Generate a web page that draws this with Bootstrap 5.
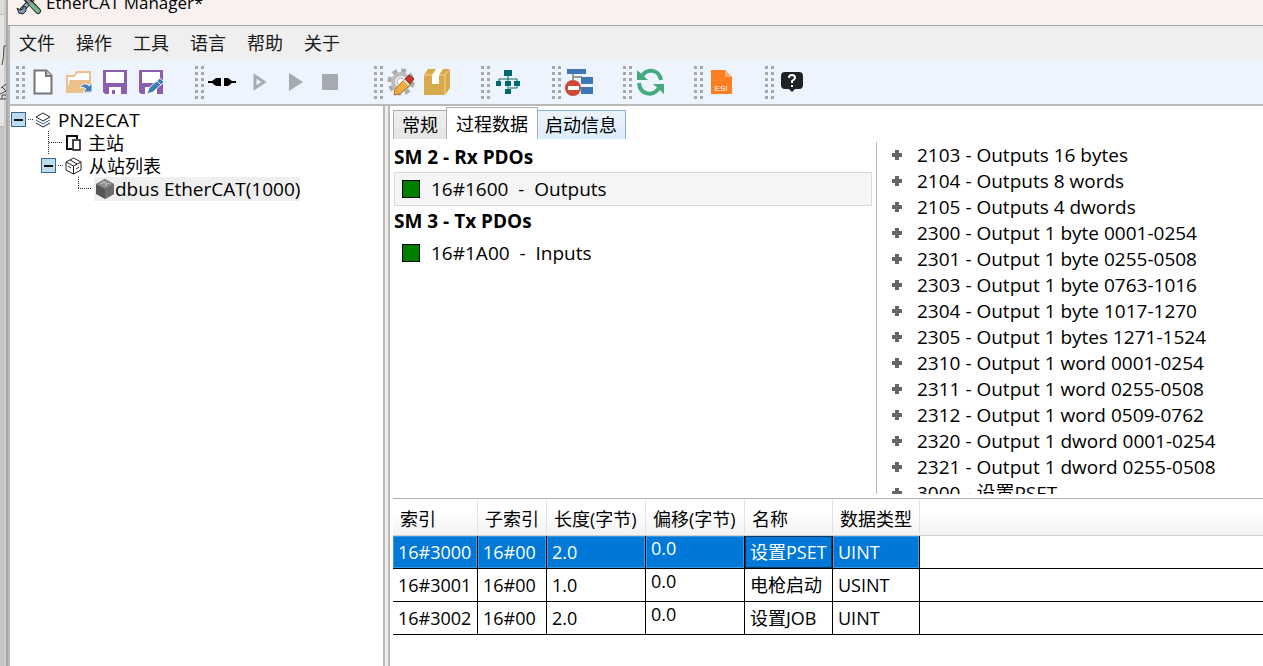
<!DOCTYPE html>
<html lang="zh-CN">
<head>
<meta charset="utf-8">
<meta name="viewport" content="width=device-width, initial-scale=1">
<title>EtherCAT Manager</title>
<link href="https://cdn.jsdelivr.net/npm/bootstrap@5.3.0/dist/css/bootstrap.min.css" rel="stylesheet">
<style>
body{font-family:"Open Sans","Noto Sans CJK SC",sans-serif;font-size:18px;line-height:24px;color:#000;background:#fff}
button{color:inherit}
.desk{width:6px;background:#e6e5e5;border-right:2px solid #cfcccc}
.desk .upper{height:15px;background:#dcdada;border-bottom:1px solid #c4c2c2}
.desk .middle{height:111px}
.desk .lower{background:#c6c4c5;border-top:1px solid #b5b3b3}
.win{border-left:2px solid #a9a9a9}
.titlebar{height:26px;background:#f9f1ef;border-bottom:1px solid #a5a5a5;padding-left:8px}
.titlebar .cap{font-size:17px;line-height:26px;margin-top:-10px}
.titlebar svg{margin-top:-6px}
.client{border-left:2px solid #b9b9b9}
.menubar{background:#efefef;height:34px;gap:21px;padding:0 9px}
.menubar a,.menubar a:hover{color:#1a1a1a;text-decoration:none}
.toolbar{background:#edf4fd;height:46px;border-bottom:2px solid #b9b9b9;padding-left:3px;gap:23px}
.tool{border:0;background:none;padding:0;width:36px;height:32px}
.grip{width:12px;height:33px;background:conic-gradient(#a8a8aa 25%,transparent 0) 0 0/6px 6px}
.tree{width:373px;padding:2px 0 0 1px}
.tree .line{height:23px;white-space:nowrap}
.latin{font-size:19px}
.twig{margin-right:7px}
.toggle{width:15px;height:15px;border:1px solid #39648c;background:#bcdcf0;padding:0}
.toggle::before{content:"";width:9px;height:2px;background:#111}
.dots{width:6px;height:1px;margin:0 1px 0 2px;background:repeating-linear-gradient(90deg,#333 0 1px,transparent 1px 2px)}
.nested{padding-left:30px}
.marked{background:#efefef}
.split{width:7px;background:#efefef;border-left:2px solid #b9b9b9;border-right:2px solid #b9b9b9}
.tabs{height:33px;margin:0 0 3px 3px}
.tabs button{border:1px solid #acacac;border-bottom:0;background:linear-gradient(#f0f0f0,#e4e4e4);height:29px;padding:0 8px;border-right:0}
.tabs button.current{background:#fff;height:32px;padding:0 9px;border-right:1px solid #acacac}
.tabs button.hot{background:linear-gradient(#ecf4fc,#dcecfc);border:1px solid #7eb4ea;border-bottom:0;border-left:0;padding:0 8px 0 7px}
.pdos{width:486px;padding:0 4px 0 4px;font-size:19px}
.pdos h2{font-size:19px;line-height:30px;font-weight:700;margin:0}
.pdo{height:34px;border:1px solid transparent;padding-left:7px;white-space:pre}
.pdo.chosen{background:#f5f5f5;border-color:#dadada}
.led{width:18px;height:18px;background:green;border:1px solid #000;margin-right:11px}
.objects{border-left:1px solid #b9b9b9;padding-left:15px;margin:0;font-size:19px}
.objects li{height:26px;white-space:nowrap}
.plus{width:10px;height:10px;margin-right:15px;border:0;padding:0;background:linear-gradient(#666,#666) center/10px 4px no-repeat,linear-gradient(#666,#666) center/4px 10px no-repeat}
.lowerpane{border-top:1px solid #b0b0b0;margin:4px 0 31px 3px;padding-top:1px}
.vars{table-layout:fixed;width:100%;border-collapse:separate;border-spacing:0}
.vars th{font-weight:400;height:36px;padding:2px 0 0 7px;background:linear-gradient(#fff 35%,#f3f3f4);border-right:1px solid #e2e2e2;border-bottom:1px solid #d0d0d0;white-space:nowrap}
.vars td{height:33px;padding:0 0 0 5px;border-right:1px solid #000;border-bottom:1px solid #000;white-space:nowrap}
.vars td.high{vertical-align:top}
.vars .picked td:not(:last-child){background:#0078d7;color:#fff;box-shadow:inset 0 0 0 1px #3b97e0}
.vars .picked td.focus{box-shadow:inset 0 0 0 1px #043a68}
.vars th:last-child,.vars td:last-child{border-right:0}
</style>
</head>
<body>
<div class="d-flex vh-100 overflow-hidden">
<div class="desk flex-shrink-0 d-flex flex-column"><div class="upper"></div>
<div class="middle"><svg class="d-block" width="6" height="110" viewBox="0 0 6 110"><path d="M6 31H4q0 12-2 19M6 69 1 73M2 72l4 4M6 76 0 79M2 80h4M2 80v4M0 84h6" fill="none" stroke="#444"/></svg></div>
<div class="lower flex-grow-1"></div></div>
<div class="win d-flex flex-column flex-grow-1 overflow-hidden">
<header class="titlebar d-flex flex-shrink-0">
<svg class="flex-shrink-0" width="26" height="22" viewBox="0 0 26 22"><g fill="none" stroke-linecap="round"><path d="M19 2 5 17" stroke="#222" stroke-width="5"/><path d="M19 2 6 16" stroke="#9fb4cc" stroke-width="3"/><path d="M8 2 22 17" stroke="#222" stroke-width="6"/><path d="m15 10 7 7" stroke="#74b58f" stroke-width="4"/><path d="M8 2 14 9" stroke="#8a8f96" stroke-width="3"/></g><path d="m1 14 3 2 3-1 0-3 3 1 0 4-3 3-4-1z" fill="#7d9cc0" stroke="#222"/></svg>
<div class="cap ms-1 text-nowrap">EtherCAT Manager*</div>
</header>
<div class="client d-flex flex-column flex-grow-1 overflow-hidden">
<nav class="menubar d-flex align-items-center flex-shrink-0"><a href="#">文件</a><a href="#">操作</a><a href="#">工具</a><a href="#">语言</a><a href="#">帮助</a><a href="#">关于</a></nav>
<div class="toolbar d-flex align-items-center flex-shrink-0" role="toolbar">
<div class="d-flex"><span class="grip"></span>
<button class="tool d-flex align-items-center justify-content-center" aria-label="新建"><svg width="20" height="26" viewBox="0 0 20 26"><path d="M1.500 1.500h12l5 5v18h-17z" fill="#fff" stroke="#777" stroke-width="2"/><path d="M13 1v6h6" fill="#ccc" stroke="#777" stroke-width="2"/></svg></button>
<button class="tool d-flex align-items-center justify-content-center" aria-label="打开"><svg width="28" height="24" viewBox="0 0 28 24"><path d="M2 22V6h7l3-4h13v20z" fill="#fff" stroke="#ecc088" stroke-width="2"/><path d="M1 23 5 10h20l-3 13z" fill="#ecc088"/><path d="M15 18c2-5 7-5 9-2l3-3v9h-9l3-3c-2-2-4-2-6-1z" fill="#3f7eb8" stroke="#edf4fd"/></svg></button>
<button class="tool d-flex align-items-center justify-content-center" aria-label="保存"><svg width="26" height="26" viewBox="0 0 26 26"><path d="M1 1h24v24H3l-2-2z" fill="#8b5db0"/><path d="M4 3h18v11H4zM7 18h12v7H7z" fill="#fff"/><path d="M10 21h3v4h-3z" fill="#8b5db0"/></svg></button>
<button class="tool d-flex align-items-center justify-content-center" aria-label="另存为"><svg width="26" height="26" viewBox="0 0 26 26"><path d="M1 1h24v24H3l-2-2z" fill="#8b5db0"/><path d="M4 3h18v11H4zM7 18h12v7H7z" fill="#fff"/><path d="m9 25 2-6 11-10 4 4-11 10z" fill="#3d7eb5" stroke="#edf4fd"/><path d="m19 12 4 4" stroke="#fff"/></svg></button></div>
<div class="d-flex"><span class="grip"></span>
<button class="tool d-flex align-items-center justify-content-center" aria-label="连接"><svg width="28" height="10" viewBox="0 0 28 10"><path d="M0 5h28" stroke="#000" stroke-width="2"/><path d="M13 1v8H8L4 6V4l4-3zM16 1h4l4 3v2l-4 3h-4z" fill="#000"/><path d="M14.500 0v10" stroke="#edf4fd" stroke-width="3"/></svg></button>
<button class="tool d-flex align-items-center justify-content-center" aria-label="单步"><svg class="ms-1" width="14" height="18" viewBox="0 0 14 18"><path d="M2 3v12l9-6z" fill="none" stroke="#a8acb3" stroke-width="3"/></svg></button>
<button class="tool d-flex align-items-center justify-content-center" aria-label="运行"><svg class="ms-1" width="14" height="18" viewBox="0 0 14 18"><path d="M0 0v18l14-9z" fill="#a6aab1"/></svg></button>
<button class="tool d-flex align-items-center justify-content-center" aria-label="停止"><svg width="16" height="16" viewBox="0 0 16 16"><rect width="16" height="16" rx="1" fill="#a6aab1"/></svg></button></div>
<div class="d-flex"><span class="grip"></span>
<button class="tool d-flex align-items-center justify-content-center" aria-label="设置"><svg width="28" height="28" viewBox="0 0 28 28"><circle cx="14" cy="14" r="11.500" fill="none" stroke="#aaa" stroke-width="4" stroke-dasharray="5 4"/><circle cx="14" cy="14" r="8" fill="none" stroke="#bbb" stroke-width="4"/><circle cx="14" cy="14" r="4" fill="#fff" stroke="#aaa"/><path d="m7 27 1-6 10-10 6 5-11 10z" fill="#f0ad3e" stroke="#a6762c"/><path d="m18 11 4-4 5 4-4 5z" fill="#c83a2b" stroke="#8a2418"/><path d="m17 12 5 5" stroke="#ddd" stroke-width="2"/></svg></button>
<button class="tool d-flex align-items-center justify-content-center" aria-label="打包"><svg width="28" height="28" viewBox="0 0 28 28"><path d="M1 7 5 1h22v19l-5 7H1z" fill="#d9aa4c"/><path d="M1 7h21v20M22 7l5-6" fill="none" stroke="#f2d69a"/><path d="M9 7l4-6h7l-4 6v9H9z" fill="#fff"/></svg></button></div>
<div class="d-flex"><span class="grip"></span>
<button class="tool d-flex align-items-center justify-content-center" aria-label="拓扑"><svg width="24" height="24" viewBox="0 0 24 24"><path d="M12 4v18M3 13V9h18v9h-8" fill="none" stroke="#0a6b6e" stroke-width="1"/><path d="M8 0h8v6H8zM0 11h5v5H0zM9 11h6v5H9zM18 11h6v5h-6zM9 19h6v5H9z" fill="#006a6e"/></svg></button></div>
<div class="d-flex"><span class="grip"></span>
<button class="tool d-flex align-items-center justify-content-center" aria-label="断开"><svg width="28" height="28" viewBox="0 0 28 28"><path d="M8 4v8M8 9h9" stroke="#999" stroke-width="2"/><path d="M2 1h19v5H2zM16 9h12v7H16zM16 19h12v7H16z" fill="#3d78b4"/><circle cx="8" cy="20" r="8" fill="#cd4936"/><path d="M3 18h11v4H3z" fill="#fff"/></svg></button></div>
<div class="d-flex"><span class="grip"></span>
<button class="tool d-flex align-items-center justify-content-center" aria-label="刷新"><svg width="28" height="28" viewBox="0 0 28 28"><g fill="none" stroke="#43aa7d" stroke-width="4"><path d="M6 8c5-8 17-7 19 4"/><path d="M3 15c1 12 14 14 20 5"/></g><path d="M1 2v10h11zM28 26V16H17z" fill="#43aa7d"/></svg></button></div>
<div class="d-flex"><span class="grip"></span>
<button class="tool d-flex align-items-center justify-content-center" aria-label="ESI"><svg width="22" height="26" viewBox="0 0 22 26"><path d="M1 1h14l7 7v17H1z" fill="#ff7e22"/><path d="M15 1v7h7z" fill="#efb57c"/><text x="11" y="22" text-anchor="middle" font-family="Liberation Sans" font-size="8" fill="#fff">ESI</text></svg></button></div>
<div class="d-flex"><span class="grip"></span>
<button class="tool d-flex align-items-center justify-content-center" aria-label="帮助"><svg width="22" height="22" viewBox="0 0 22 22"><path d="M4 1h14q4 0 4 4v9q0 4-4 4h-4l-3 3-3-3H4q-4 0-4-4V5q0-4 4-4z" fill="#1e2126"/><path d="M8 7q0-3 3-3t3 3q0 1-3 3v2M11 14v2" fill="none" stroke="#fff" stroke-width="2"/></svg></button></div>
</div>
<main class="d-flex flex-grow-1 overflow-hidden">
<aside class="tree flex-shrink-0">
<div class="line d-flex align-items-center latin"><button class="toggle d-flex align-items-center justify-content-center" aria-label="折叠"></button><span class="dots"></span><svg class="twig" width="16" height="16" viewBox="0 0 16 16"><path d="m8 1 7 4-7 4-7-4z" fill="none" stroke="#222"/><path d="m1 8 7 4 7-4" fill="none" stroke="#3566b0"/><path d="m1 11 7 4 7-4" fill="none" stroke="#222"/></svg>PN2ECAT</div>
<div class="line d-flex align-items-center"><svg width="54" height="23" viewBox="0 0 54 23"><path d="M37.500 0v23M38 11.500h13" stroke="#222" stroke-dasharray="1 1"/></svg><svg class="twig" width="16" height="16" viewBox="0 0 16 16"><path d="M7 14H2V1h10v3" fill="none" stroke="#111" stroke-width="2"/><path d="M8 5h7v10H8z" fill="none" stroke="#111" stroke-width="1.500"/></svg>主站</div>
<div class="line d-flex align-items-center nested"><button class="toggle d-flex align-items-center justify-content-center" aria-label="折叠"></button><span class="dots"></span><svg class="twig" width="17" height="18" viewBox="0 0 17 18"><path d="m8.500 1 7.500 4v8l-7.500 4L1 13V5zM1 5l7.500 4L16 5M8.500 9v8M5 3l7 4M3 9l3 2M11 12l3-2" fill="none" stroke="#222"/></svg>从站列表</div>
<div class="line d-flex align-items-center latin"><svg width="83" height="23" viewBox="0 0 83 23"><path d="M67.500 0v11M67 11.500h14" fill="none" stroke="#222" stroke-dasharray="1 1"/></svg><span class="marked d-flex align-items-center ps-0"><svg width="21" height="20" viewBox="0 0 21 20"><path d="m11 0 9 5v10l-9 5-9-5V5z" fill="#555"/><path d="m11 0 9 5-9 5-9-5z" fill="#8a8a8a"/><path d="m11 10 9-5v10l-9 5z" fill="#6d6d6d"/><path d="m7 5 3-2 3 2-2 2M14 4l1 1" fill="none" stroke="#ddd"/></svg>dbus EtherCAT(1000)</span></div>
</aside>
<div class="split flex-shrink-0"></div>
<section class="d-flex flex-column flex-grow-1 overflow-hidden">
<div class="tabs d-flex align-items-end flex-shrink-0"><button>常规</button><button class="current">过程数据</button><button class="hot">启动信息</button></div>
<div class="d-flex flex-grow-1 overflow-hidden">
<div class="pdos flex-shrink-0">
<h2>SM 2 - Rx PDOs</h2><div class="pdo chosen d-flex align-items-center"><span class="led"></span>16#1600  -  Outputs</div>
<h2>SM 3 - Tx PDOs</h2><div class="pdo d-flex align-items-center"><span class="led"></span>16#1A00  -  Inputs</div>
</div>
<ul class="objects list-unstyled flex-grow-1 overflow-hidden">
<li class="d-flex align-items-center"><button class="plus" aria-label="展开"></button>2103 - Outputs 16 bytes</li>
<li class="d-flex align-items-center"><button class="plus" aria-label="展开"></button>2104 - Outputs 8 words</li>
<li class="d-flex align-items-center"><button class="plus" aria-label="展开"></button>2105 - Outputs 4 dwords</li>
<li class="d-flex align-items-center"><button class="plus" aria-label="展开"></button>2300 - Output 1 byte 0001-0254</li>
<li class="d-flex align-items-center"><button class="plus" aria-label="展开"></button>2301 - Output 1 byte 0255-0508</li>
<li class="d-flex align-items-center"><button class="plus" aria-label="展开"></button>2303 - Output 1 byte 0763-1016</li>
<li class="d-flex align-items-center"><button class="plus" aria-label="展开"></button>2304 - Output 1 byte 1017-1270</li>
<li class="d-flex align-items-center"><button class="plus" aria-label="展开"></button>2305 - Output 1 bytes 1271-1524</li>
<li class="d-flex align-items-center"><button class="plus" aria-label="展开"></button>2310 - Output 1 word 0001-0254</li>
<li class="d-flex align-items-center"><button class="plus" aria-label="展开"></button>2311 - Output 1 word 0255-0508</li>
<li class="d-flex align-items-center"><button class="plus" aria-label="展开"></button>2312 - Output 1 word 0509-0762</li>
<li class="d-flex align-items-center"><button class="plus" aria-label="展开"></button>2320 - Output 1 dword 0001-0254</li>
<li class="d-flex align-items-center"><button class="plus" aria-label="展开"></button>2321 - Output 1 dword 0255-0508</li>
<li class="d-flex align-items-center"><button class="plus" aria-label="展开"></button>3000 - 设置PSET</li>
</ul>
</div>
<div class="lowerpane flex-shrink-0">
<table class="vars">
<colgroup><col style="width:85px"><col style="width:69px"><col style="width:99px"><col style="width:99px"><col style="width:88px"><col style="width:87px"><col></colgroup>
<thead><tr><th>索引</th><th>子索引</th><th>长度(字节)</th><th>偏移(字节)</th><th>名称</th><th>数据类型</th><th></th></tr></thead>
<tbody>
<tr class="picked"><td>16#3000</td><td>16#00</td><td>2.0</td><td class="high">0.0</td><td class="focus">设置PSET</td><td>UINT</td><td></td></tr>
<tr><td>16#3001</td><td>16#00</td><td>1.0</td><td class="high">0.0</td><td>电枪启动</td><td>USINT</td><td></td></tr>
<tr><td>16#3002</td><td>16#00</td><td>2.0</td><td class="high">0.0</td><td>设置JOB</td><td>UINT</td><td></td></tr>
</tbody></table>
</div>
</section>
</main>
</div></div></div>
<script src="https://cdn.jsdelivr.net/npm/bootstrap@5.3.0/dist/js/bootstrap.bundle.min.js"></script>
</body>
</html>
